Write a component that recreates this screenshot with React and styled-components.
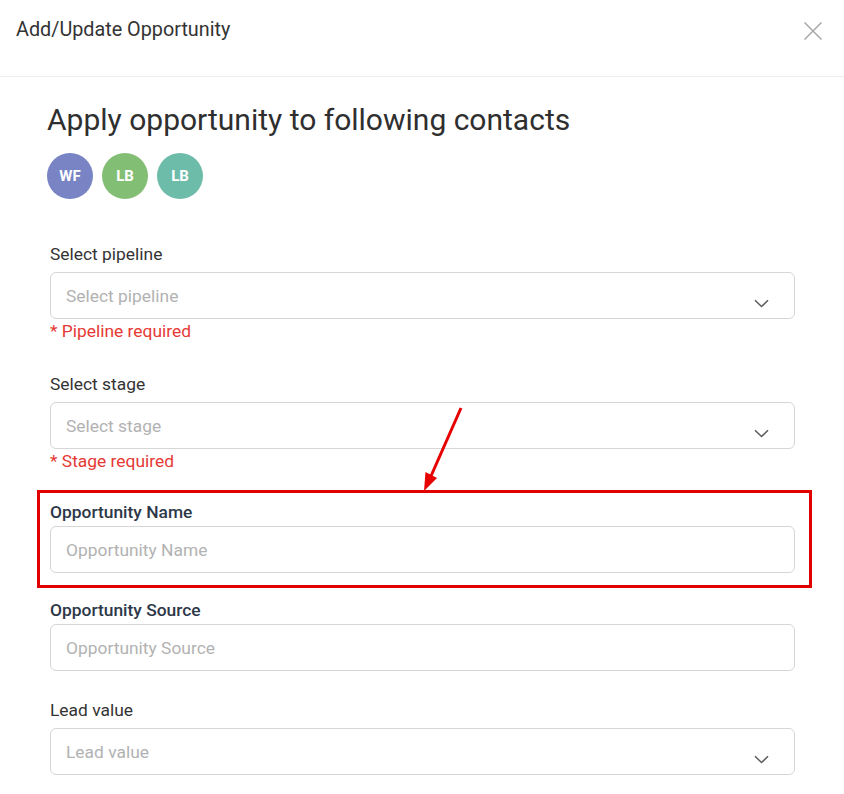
import React from "react";
import styled, { createGlobalStyle } from "styled-components";

const GlobalStyle = createGlobalStyle`
  html, body {
    margin: 0;
    padding: 0;
    background: #ffffff;
    overflow: hidden;
  }
  body {
    font-family: Roboto, "Liberation Sans", sans-serif;
  }
`;

const Page = styled.div`
  position: relative;
  width: 844px;
  height: 794px;
  background: #fff;
`;

const Header = styled.div`
  display: flex;
  justify-content: space-between;
  align-items: flex-start;
  height: 77px;
  box-sizing: border-box;
  padding: 18px 22px 0 16px;
  border-bottom: 1px solid #ececec;
`;

const HeaderTitle = styled.div`
  font-size: 19.8px;
  line-height: 24px;
  color: #333;
`;

const CloseButton = styled.button`
  border: none;
  background: none;
  padding: 0;
  margin-top: 4px;
  width: 18px;
  height: 18px;
  cursor: pointer;
  color: #a8a8a8;
`;

const Contacts = styled.div`
  padding: 26px 0 0 47px;
`;

const Heading = styled.h2`
  margin: 0;
  font-size: 30px;
  line-height: 34px;
  font-weight: 400;
  color: #2f2f2f;
`;

const AvatarRow = styled.div`
  display: flex;
  gap: 9px;
  margin-top: 16px;
`;

const Avatar = styled.div`
  width: 46px;
  height: 46px;
  border-radius: 50%;
  background: ${({ color }) => color};
  color: #fff;
  font-size: 15px;
  font-weight: 700;
  display: flex;
  align-items: center;
  justify-content: center;
`;

const Form = styled.div`
  display: flex;
  flex-direction: column;
  padding: 45px 49px 0 50px;
`;

const Field = styled.div`
  display: flex;
  flex-direction: column;
  margin-bottom: ${({ gap }) => gap}px;
`;

const Label = styled.label`
  font-size: 17.4px;
  line-height: 20px;
  color: ${({ strong }) => (strong ? "#2d3748" : "#333")};
  font-weight: ${({ strong }) => (strong ? 500 : 400)};
  margin-bottom: ${({ strong }) => (strong ? 4 : 8)}px;
`;

const InputBox = styled.div`
  height: 47px;
  box-sizing: border-box;
  border: 1px solid #d6d6d6;
  border-radius: 6px;
  display: flex;
  align-items: center;
  justify-content: space-between;
  padding: 0 25px 0 15px;
  font-size: 17.4px;
  color: #b2b2b2;
`;

const Chevron = styled.svg`
  width: 15px;
  height: 9px;
  margin-top: 16px;
  color: #5f5f5f;
`;

const Error = styled.div`
  font-size: 17.4px;
  line-height: 20px;
  margin-top: 2px;
  color: #e53935;
`;

const Highlight = styled.div`
  border: 3px solid #e10000;
  margin: -12px -17px 12px -13px;
  padding: 9px 14px 12px 10px;
`;

const Arrow = styled.svg`
  position: absolute;
  left: 0;
  top: 0;
  pointer-events: none;
`;

const ChevronIcon = () => (
  <Chevron viewBox="0 0 15 9" fill="none">
    <path d="M1 1.2l6.5 6.3 6.5-6.3" stroke="currentColor" strokeWidth="1.6" />
  </Chevron>
);

const SelectInput = ({ placeholder }) => (
  <InputBox>
    <span>{placeholder}</span>
    <ChevronIcon />
  </InputBox>
);

const contacts = [
  { initials: "WF", color: "#7884c4" },
  { initials: "LB", color: "#82bf74" },
  { initials: "LB", color: "#6dbcaa" },
];

export default function App() {
  return (
    <Page>
      <GlobalStyle />
      <Header>
        <HeaderTitle>Add/Update Opportunity</HeaderTitle>
        <CloseButton aria-label="Close">
          <svg viewBox="0 0 18 18" width="18" height="18" fill="none">
            <path d="M0.5 0.5l17 17M17.5 0.5l-17 17" stroke="currentColor" strokeWidth="1.5" />
          </svg>
        </CloseButton>
      </Header>

      <Contacts>
        <Heading>Apply opportunity to following contacts</Heading>
        <AvatarRow>
          {contacts.map((c, i) => (
            <Avatar key={i} color={c.color}>
              {c.initials}
            </Avatar>
          ))}
        </AvatarRow>
      </Contacts>

      <Form>
        <Field gap={33}>
          <Label>Select pipeline</Label>
          <SelectInput placeholder="Select pipeline" />
          <Error>* Pipeline required</Error>
        </Field>
        <Field gap={31}>
          <Label>Select stage</Label>
          <SelectInput placeholder="Select stage" />
          <Error>* Stage required</Error>
        </Field>
        <Highlight>
          <Field gap={0}>
            <Label strong>Opportunity Name</Label>
            <InputBox>Opportunity Name</InputBox>
          </Field>
        </Highlight>
        <Field gap={29}>
          <Label strong>Opportunity Source</Label>
          <InputBox>Opportunity Source</InputBox>
        </Field>
        <Field gap={0}>
          <Label>Lead value</Label>
          <SelectInput placeholder="Lead value" />
        </Field>
      </Form>

      <Arrow width="844" height="794" viewBox="0 0 844 794">
        <line x1="461" y1="408" x2="431" y2="476" stroke="#e60000" strokeWidth="3" />
        <polygon points="424,491 437,478 425.5,472" fill="#e60000" />
      </Arrow>
    </Page>
  );
}
